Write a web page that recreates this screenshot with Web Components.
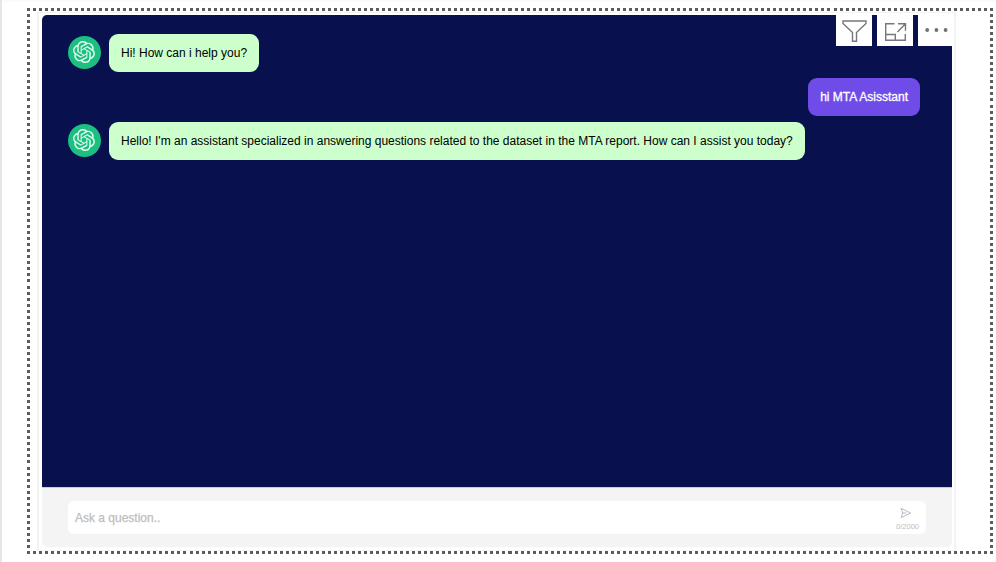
<!DOCTYPE html>
<html lang="en">
<head>
<meta charset="utf-8">
<title>MTA Assistant</title>
<style>
html, body { margin: 0; height: 100%; overflow: hidden; background: #fff; font-family: "Liberation Sans", Arial, sans-serif; }
</style>
</head>
<body>
<report-canvas>
  <chat-panel>
    <visual-toolbar slot="tools"></visual-toolbar>
    <chat-message>Hi! How can i help you?</chat-message>
    <chat-message from="user">hi MTA Asisstant</chat-message>
    <chat-message>Hello! I'm an assistant specialized in answering questions related to the dataset in the MTA report. How can I assist you today?</chat-message>
    <chat-input slot="footer"></chat-input>
  </chat-panel>
</report-canvas>
<script>
function define(name, html) {
  customElements.define(name, class extends HTMLElement {
    constructor() {
      super();
      this.attachShadow({ mode: 'open' }).innerHTML = html;
    }
  });
}

define('report-canvas', `
<style>
:host { display: block; box-sizing: border-box; width: 996px; height: 562px; padding: 8px 3px 8px 25px; border-left: 2px solid #e6e6e6; background: linear-gradient(#f8f8f8, #fff 3px); }
.frame { --d: #5c5c5c; box-sizing: border-box; width: 966px; height: 546px; padding: 4px 35px 3px 10px;
  background:
    repeating-linear-gradient(90deg, var(--d) 0 3px, transparent 3px 6.01875px) 0 0 / 100% 3px no-repeat,
    repeating-linear-gradient(90deg, var(--d) 0 3px, transparent 3px 6.01875px) 0 100% / 100% 3px no-repeat,
    repeating-linear-gradient(180deg, var(--d) 0 3px, transparent 3px 6.03333px) 0 0 / 3px 100% no-repeat,
    repeating-linear-gradient(180deg, var(--d) 0 3px, transparent 3px 6.03333px) 100% 0 / 3px 100% no-repeat; }
.visual { box-sizing: border-box; width: 919px; height: 539px; border: solid #f3f3f3; border-width: 1px 2px; padding: 2px 3px; }
</style>
<div class="frame"><div class="visual"><slot></slot></div></div>`);

define('chat-panel', `
<style>
:host { display: flex; flex-direction: column; position: relative; width: 910px; height: 532px; border-radius: 5px 0 5px 5px; overflow: hidden; }
.log { flex: 1; display: flex; flex-direction: column; gap: 6px; padding: 19px 32px 0 26px; background: #08104d; }
.tools { position: absolute; right: 0; top: 0; }
</style>
<div class="log"><slot></slot></div>
<slot name="footer"></slot>
<div class="tools"><slot name="tools"></slot></div>`);

define('chat-message', `
<style>
:host { display: flex; align-items: center; gap: 8px; height: 38px; }
:host([from="user"]) { justify-content: flex-end; }
:host([from="user"]) .avatar { display: none; }
.avatar { display: flex; align-items: center; justify-content: center; width: 33px; height: 33px; margin-bottom: 1px; border-radius: 50%; background: #1dbf80; }
.avatar svg { margin: 0 1px 1px 0; }
.bubble { box-sizing: border-box; height: 38px; padding: 0 12px; border-radius: 9px; background: #ccffcc; color: #000; font-size: 12px; line-height: 38px; white-space: nowrap; }
:host([from="user"]) .bubble { background: #6f4be8; color: #fff; -webkit-text-stroke: .3px #fff; }
</style>
<div class="avatar"><svg width="22" height="22" viewBox="0 0 24 24" fill="#e0fbef"><path d="M22.2819 9.8211a5.9847 5.9847 0 0 0-.5157-4.9108 6.0462 6.0462 0 0 0-6.5098-2.9A6.0651 6.0651 0 0 0 4.9807 4.1818a5.9847 5.9847 0 0 0-3.9977 2.9 6.0462 6.0462 0 0 0 .7427 7.0966 5.98 5.98 0 0 0 .511 4.9107 6.051 6.051 0 0 0 6.5146 2.9001A5.9847 5.9847 0 0 0 13.2599 24a6.0557 6.0557 0 0 0 5.7718-4.2058 5.9894 5.9894 0 0 0 3.9977-2.9001 6.0557 6.0557 0 0 0-.7475-7.073zm-9.022 12.6081a4.4755 4.4755 0 0 1-2.8764-1.0408l.1419-.0804 4.7783-2.7582a.7948.7948 0 0 0 .3927-.6813v-6.7369l2.02 1.1686a.071.071 0 0 1 .038.052v5.5826a4.504 4.504 0 0 1-4.4945 4.4944zm-9.6607-4.1254a4.4708 4.4708 0 0 1-.5346-3.0137l.142.0852 4.783 2.7582a.7712.7712 0 0 0 .7806 0l5.8428-3.3685v2.3324a.0804.0804 0 0 1-.0332.0615L9.74 19.9502a4.4992 4.4992 0 0 1-6.1408-1.6464zM2.3408 7.8956a4.485 4.485 0 0 1 2.3655-1.9728V11.6a.7664.7664 0 0 0 .3879.6765l5.8144 3.3543-2.0201 1.1685a.0757.0757 0 0 1-.071 0l-4.8303-2.7865A4.504 4.504 0 0 1 2.3408 7.872zm16.5963 3.8558L13.1038 8.364 15.1192 7.2a.0757.0757 0 0 1 .071 0l4.8303 2.7913a4.4944 4.4944 0 0 1-.6765 8.1042v-5.6772a.79.79 0 0 0-.407-.667zm2.0107-3.0231l-.142-.0852-4.7735-2.7818a.7759.7759 0 0 0-.7854 0L9.409 9.2297V6.8974a.0662.0662 0 0 1 .0284-.0615l4.8303-2.7866a4.4992 4.4992 0 0 1 6.6802 4.66zM8.3065 12.863l-2.02-1.1638a.0804.0804 0 0 1-.038-.0567V6.0742a4.4992 4.4992 0 0 1 7.3757-3.4537l-.142.0805L8.704 5.459a.7948.7948 0 0 0-.3927.6813zm1.0976-2.3654l2.602-1.4998 2.6069 1.4998v2.9994l-2.5974 1.4997-2.6067-1.4997Z"/></svg></div>
<div class="bubble"><slot></slot></div>`);

define('visual-toolbar', `
<style>
:host { display: flex; gap: 5px; height: 31px; }
span { display: block; width: 36px; height: 31px; background: #fff; overflow: hidden; }
span:last-child { width: 34px; }
svg { display: block; fill: none; stroke: #777; stroke-width: 1.4; }
</style>
<span><svg width="36" height="31" viewBox="0 0 36 31"><path d="M7 6H30V8.500L20.500 17.500V26.300H16.500V17.500L7 8.500z"/></svg></span>
<span><svg width="36" height="31" viewBox="0 0 36 31"><path d="M17.500 8.700H8.700V25.300H28.300V19M8.700 19.500H18.300V25.300M20.500 17L28.300 9M21 8.700H28.500V15.700"/></svg></span>
<span><svg width="34" height="31" viewBox="0 0 34 31"><g fill="#707070" stroke="none"><circle cx="9.200" cy="15" r="1.900"/><circle cx="18.400" cy="15" r="1.900"/><circle cx="27.600" cy="15" r="1.900"/></g></svg></span>`);

define('chat-input', `
<style>
:host { display: block; box-sizing: border-box; height: 60px; padding: 13px 26px; background: #f4f4f4; border-top: 1px solid #c5cbed; }
.field { display: flex; align-items: center; justify-content: space-between; box-sizing: border-box; height: 33px; padding: 0 7px; border-radius: 6px; background: #fff; color: #bdbdbd; font-size: 12px; }
.hint { -webkit-text-stroke: .25px #bdbdbd; }
.send { display: flex; flex-direction: column; align-items: center; gap: 3px; padding-top: 3px; font-size: 7.5px; line-height: 9px; }
svg { display: block; fill: none; stroke: #bcbcbc; stroke-width: 1; stroke-linejoin: round; margin-right: 4px; }
</style>
<div class="field"><span class="hint">Ask a question..</span><span class="send"><svg width="12" height="12" viewBox="0 0 12 12"><path d="M1 1.300L10.700 6L1 10.700L2.800 6zM2.800 6H6.500"/></svg><span>0/2000</span></span></div>`);
</script>
</body>
</html>
